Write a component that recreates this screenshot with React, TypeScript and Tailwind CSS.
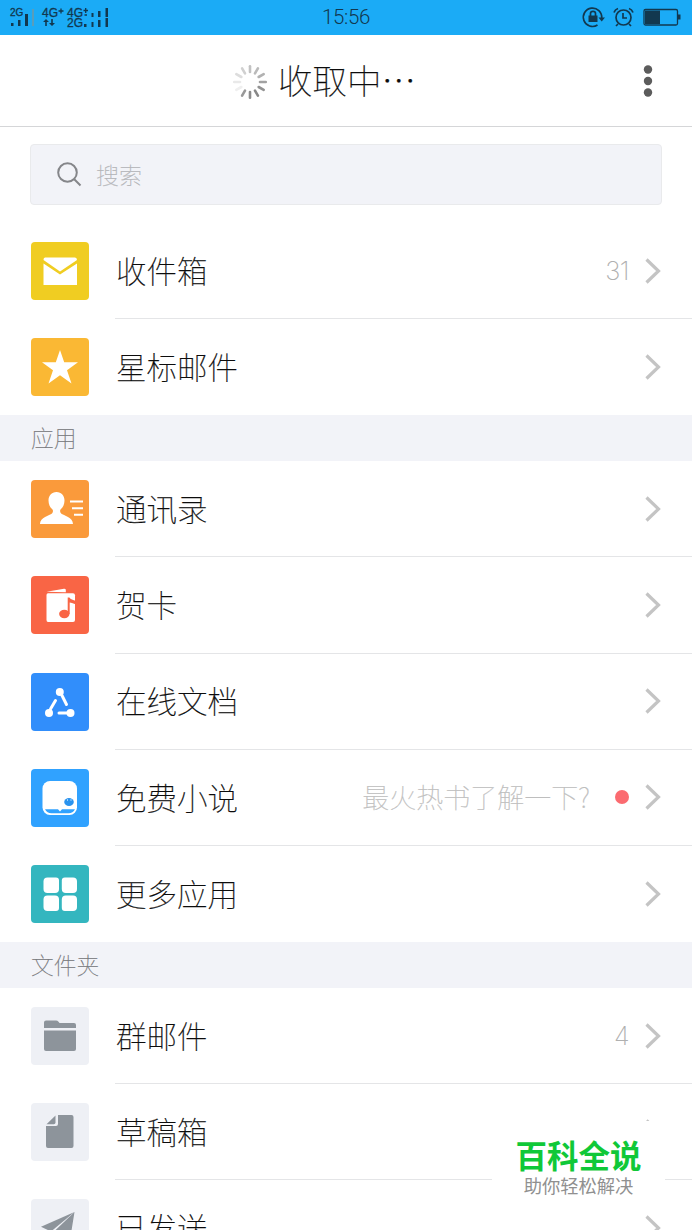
import React from "react";

type RowProps = {
    label: string;
    color: string;
    icon: React.ReactNode;
    count?: string;
    hint?: string;
    last?: boolean;
};

const Chevron = () => (
    <svg width="18" height="28" viewBox="0 0 18 28" fill="none" stroke="#c4c4c4" strokeWidth="3.2">
        <path d="M2.500 2.500 14.500 14 2.500 25.500" />
    </svg>
);

const MailIcon = () => (
    <svg viewBox="0 0 58 58">
        <path fill="#fff" d="M12.500 21.500 29 32.500 46 21.500V43H12.500z" />
        <path fill="#fff" d="M14 15.500h30q2 0 2 2.500L29 29.500 12.500 18q0-2.500 1.500-2.500z" />
    </svg>
);

const StarIcon = () => (
    <svg viewBox="0 0 58 58">
        <path fill="#fff" d="m29 12 4.200 12.200H47L36 32.200l4.500 13.300L29 37.300l-11.500 8.200L22 32.200 11 24.200h13.800z" />
    </svg>
);

const ContactIcon = () => (
    <svg viewBox="0 0 58 58">
        <path fill="#fff" d="M25.500 12c5 0 8 3.600 8 8.600 0 3.800-1.600 7-3.800 8.700-.9.800-.8 3.200.4 4.200 2.600 2 11.900 3.700 11.900 10.500H9c0-6.800 9.600-8.500 12-10.500 1.200-1 1.300-3.400.3-4.200-2.200-1.700-3.800-4.900-3.800-8.700 0-5 3-8.600 8-8.600z" />
        <path stroke="#fff" strokeWidth="2" d="M39 21.500h13M41 28.200h11M43 34.700h9" />
    </svg>
);

const CardIcon = () => (
    <svg viewBox="0 0 58 58">
        <path fill="#fff" d="m15.500 15.800 17.500-3q1.500-.2 1.800 1v2.400z" />
        <path fill="#fff" d="M17 17.200h25q2 0 2 2v24.800q0 2-2 2H17q-1.500 0-1.500-2V19q0-1.800 1.500-1.800z" />
        <ellipse cx="33.300" cy="38" rx="5.200" ry="4.200" fill="#f96545" />
        <path fill="#f96545" d="M36.700 21.500h1.700q1 2 6 3.300v3.400q-4-1.800-5.700-1.800V38h-2z" />
    </svg>
);

const DocsIcon = () => (
    <svg viewBox="0 0 58 58" fill="#fff" stroke="#fff">
        <g stroke="none">
            <circle cx="28.800" cy="19" r="4" />
            <circle cx="18" cy="40" r="4" />
            <circle cx="39.500" cy="40" r="4" />
        </g>
        <path strokeWidth="3" strokeLinecap="round" d="m19.500 36 5-8.500M31 22.500l4.500 9M28 40h9" />
    </svg>
);

const NovelIcon = () => (
    <svg viewBox="0 0 58 58">
        <rect x="11.500" y="12" width="34.500" height="34" rx="7.500" fill="#fff" />
        <path fill="#30a2ff" d="M14 40.200h13l2 2.200 2-2.200h13q-2 4-6.500 4h-17q-4.500 0-6.500-4z" />
        <ellipse cx="38" cy="33" rx="4.800" ry="4" fill="#2a93ee" />
        <path stroke="#9bd0ff" strokeWidth="1" d="M36.500 30v2M40 30v2" />
    </svg>
);

const MoreIcon = () => (
    <svg viewBox="0 0 58 58" fill="#fff">
        <path d="M16.500 12.500H25q3 0 3 3v8.500q0 4-4 4h-7.500q-4 0-4-4v-7.500q0-4 4-4z" />
        <path d="M33.800 12.500H42q4 0 4 4V24q0 4-4 4h-7.200q-4 0-4-4v-8.500q0-3 3-3z" />
        <path d="M16.500 30.500H24q4 0 4 4V43q0 3-3 3h-8.500q-4 0-4-4v-7.500q0-4 4-4z" />
        <path d="M34.800 30.500H42q4 0 4 4V42q0 4-4 4h-8.200q-3 0-3-3v-8.500q0-4 4-4z" />
    </svg>
);

const FolderIcon = () => (
    <svg viewBox="0 0 58 58" fill="#8d949b">
        <path d="M15 13.500h10q1.500 0 2.500 1.300l1 1.200H43q2 0 2 2v3H13v-5.500q0-2 2-2z" />
        <path d="M13 23.500h32V42q0 2-2 2H15q-2 0-2-2z" />
    </svg>
);

const DraftIcon = () => (
    <svg viewBox="0 0 58 58" fill="#8d949b">
        <path d="M27 12h13.500q2 0 2 2v29q0 2-2 2H17q-2 0-2-2V23h10q2 0 2-2z" />
        <path d="m24.500 12.500-9 8.800h7.300q1.700 0 1.700-1.800z" />
    </svg>
);

const SentIcon = () => (
    <svg viewBox="0 0 58 58" fill="#8d949b">
        <path d="M43.500 13 10 27.800l10 4.700z" />
        <path d="M43.500 13 22 33.500v10l5.500-7L39 41z" />
    </svg>
);

const Row = ({ label, color, icon, count, hint, last }: RowProps) => (
    <div className="flex h-[96.150px] pl-[30.500px]">
        <div className={`mt-[19px] size-[58px] shrink-0 overflow-hidden rounded-[4px] ${color}`}>{icon}</div>
        <div className={`ml-[26px] flex flex-1 items-center pr-[30px] ${last ? "" : "border-b border-[#e4e5e7]"}`}>
            <span className="pb-px pl-[1.500px] text-[30.500px] leading-none text-[#0c0c0c] [-webkit-text-stroke:0.25px_#0c0c0c]">{label}</span>
            <span className="ml-auto" />
            {hint && <span className="mr-[25px] pb-[2px] text-[27px] leading-none text-[#bebebe] [-webkit-text-stroke:0.2px_#bebebe]">{hint}</span>}
            {hint && <span className="mr-[15px] size-[14px] rounded-full bg-[#fb6b70]" />}
            {count && <span className="mr-[15px] font-[Inter] text-[25.500px] leading-none font-extralight tracking-[-0.500px] text-[#b0b0b0]">{count}</span>}
            <Chevron />
        </div>
    </div>
);

const Section = ({ title }: { title: string }) => (
    <div className="flex h-[46px] items-center bg-[#f2f3f8] pl-[31px] text-[22.800px] leading-none text-[#77787c] [-webkit-text-stroke:0.2px_#77787c]">{title}</div>
);

const StatusBar = () => (
    <div className="grid h-[35px] grid-cols-3 items-center bg-[#1babf6] text-[#12384f]">
        <svg width="120" height="35" viewBox="0 0 120 35" fill="#12384f" fontFamily="Liberation Sans" fontWeight="400" stroke="none">
            <text x="10" y="16" fontSize="10" stroke="#12384f" strokeWidth=".3">2G</text>
            <path d="M11 23h2.500v3H11zM18 20h2.500v6H18zM25 14h3v12h-3z" />
            <path fill="#5a9dba" d="M32 9h2v17h-2z" />
            <text x="42" y="17" fontSize="12" stroke="#12384f" strokeWidth=".3">4G</text>
            <path d="M58.500 11h5M61 8.500v5" stroke="#12384f" strokeWidth="1.300" />
            <path d="m46 19-3 3h2.200v4h1.600v-4H49zM52 26l-3-3h2.200v-4h1.600v4H55z" />
            <text x="67" y="16.500" fontSize="12" stroke="#12384f" strokeWidth=".3">4G</text>
            <text x="67" y="27" fontSize="12" stroke="#12384f" strokeWidth=".3">2G</text>
            <path d="M83.500 10.500h4.500M85.700 8v5M84.500 15h2.500" stroke="#12384f" strokeWidth="1.300" />
            <path d="M84 24h2.500v3H84zM91.500 13h2v4h-2zM98 11h2.500v6H98zM105.500 8h2.500v9h-2.500zM91.500 22h2v5h-2zM98 20h2.500v7H98zM105.500 18h2.500v9h-2.500z" />
        </svg>
        <span className="text-center font-[Roboto] text-[20.500px] font-light tracking-[-0.400px]">15:56</span>
        <svg className="ml-auto" width="112" height="35" viewBox="580 0 112 35" fill="none" stroke="#12384f" strokeWidth="1.700">
            <path d="M597.500 25a9.200 9.200 0 1 1 4.200-7" />
            <path d="m598.500 17.500 3.200 4 3.300-4z" fill="#12384f" stroke="none" />
            <path d="M588.500 15.500h9V22h-9z" fill="#12384f" stroke="none" />
            <path d="M590.500 16v-2.500q0-2.200 2.500-2.200t2.500 2.200V16" />
            <circle cx="623.500" cy="17.500" r="7.500" />
            <path d="M623 13v5h4M614 12.500q1-3 4-4M633 12.500q-1-3-4-4M618 24l-2 2M629 24l2 2" />
            <rect x="644" y="9.500" width="33.500" height="15.500" rx="1.500" strokeWidth="1.300" />
            <path d="M645 10.500h15V24h-15zM678 14.500h2.500v5H678z" fill="#12384f" stroke="none" />
        </svg>
    </div>
);

const spokes = [
    "#c2c2c2", "#bababa", "#b2b2b2", "#a2a2a2", "#929292", "#888888",
    "#8c8c8c", "#999999", "#efefef", "#e9e9e9", "#dddddd", "#d0d0d0",
];

const Spinner = () => (
    <svg className="mt-[2px]" width="36" height="36" viewBox="-18 -18 36 36" strokeWidth="2.600" strokeLinecap="round">
        {spokes.map((c, i) => (
            <path key={i} d="M0-10V-15.800" stroke={c} transform={`rotate(${i * 30})`} />
        ))}
    </svg>
);

export default function App() {
    return (
        <div className="relative h-[1230px] w-[692px] overflow-hidden bg-white font-['Noto_Sans_CJK_SC',sans-serif] font-thin">
            <StatusBar />

            {/* Title bar */}
            <div className="flex h-[92px] items-center border-b border-[#d5d6d8] pr-[38px] pl-[232px]">
                <Spinner />
                <h1 className="ml-[10px] pb-[3px] text-[34.500px] leading-none text-[#0c0c0c] [-webkit-text-stroke:0.25px_#0c0c0c]">收取中⋯</h1>
                <svg className="ml-auto" width="12" height="34" viewBox="0 0 12 34" fill="#5c5c5c">
                    <circle cx="6" cy="5.500" r="4.200" />
                    <circle cx="6" cy="17" r="4.200" />
                    <circle cx="6" cy="28.500" r="4.200" />
                </svg>
            </div>

            <div className="mx-[30px] mt-[17px] mb-[18px] flex h-[61px] items-center rounded-[4px] border border-[#e9eaec] bg-[#f2f3f8] pb-px pl-[25px]">
                <svg width="26" height="26" viewBox="0 0 26 26" fill="none" stroke="#85868a" strokeWidth="2">
                    <circle cx="11.500" cy="11.500" r="9.300" />
                    <path d="m18 18 6.500 6.500" />
                </svg>
                <span className="ml-[14px] text-[23px] leading-none text-[#b4b5b8] [-webkit-text-stroke:0.2px_#b4b5b8]">搜索</span>
            </div>

            <Row label="收件箱" color="bg-[#f0cd22]" icon={<MailIcon />} count="31" />
            <Row label="星标邮件" color="bg-[#fab834]" icon={<StarIcon />} last />
            <Section title="应用" />
            <Row label="通讯录" color="bg-[#fa9a3b]" icon={<ContactIcon />} />
            <Row label="贺卡" color="bg-[#f96545]" icon={<CardIcon />} />
            <Row label="在线文档" color="bg-[#318efb]" icon={<DocsIcon />} />
            <Row label="免费小说" color="bg-[#30a2ff]" icon={<NovelIcon />} hint="最火热书了解一下?" />
            <Row label="更多应用" color="bg-[#34b6bf]" icon={<MoreIcon />} last />
            <Section title="文件夹" />
            <Row label="群邮件" color="bg-[#eef0f5]" icon={<FolderIcon />} count="4" />
            <Row label="草稿箱" color="bg-[#eef0f5]" icon={<DraftIcon />} />
            <Row label="已发送" color="bg-[#eef0f5]" icon={<SentIcon />} />

            {/* Site badge over the list */}
            <div className="absolute top-[1121px] left-[492px] flex h-[84px] w-[173px] flex-col items-center bg-white pt-[17px]">
                <span className="text-[31.500px] leading-[32px] font-bold text-[#10c838]">百科全说</span>
                <span className="mt-[6px] text-[18.300px] leading-[18px] font-normal text-[#909090]">助你轻松解决</span>
            </div>
        </div>
    );
}
